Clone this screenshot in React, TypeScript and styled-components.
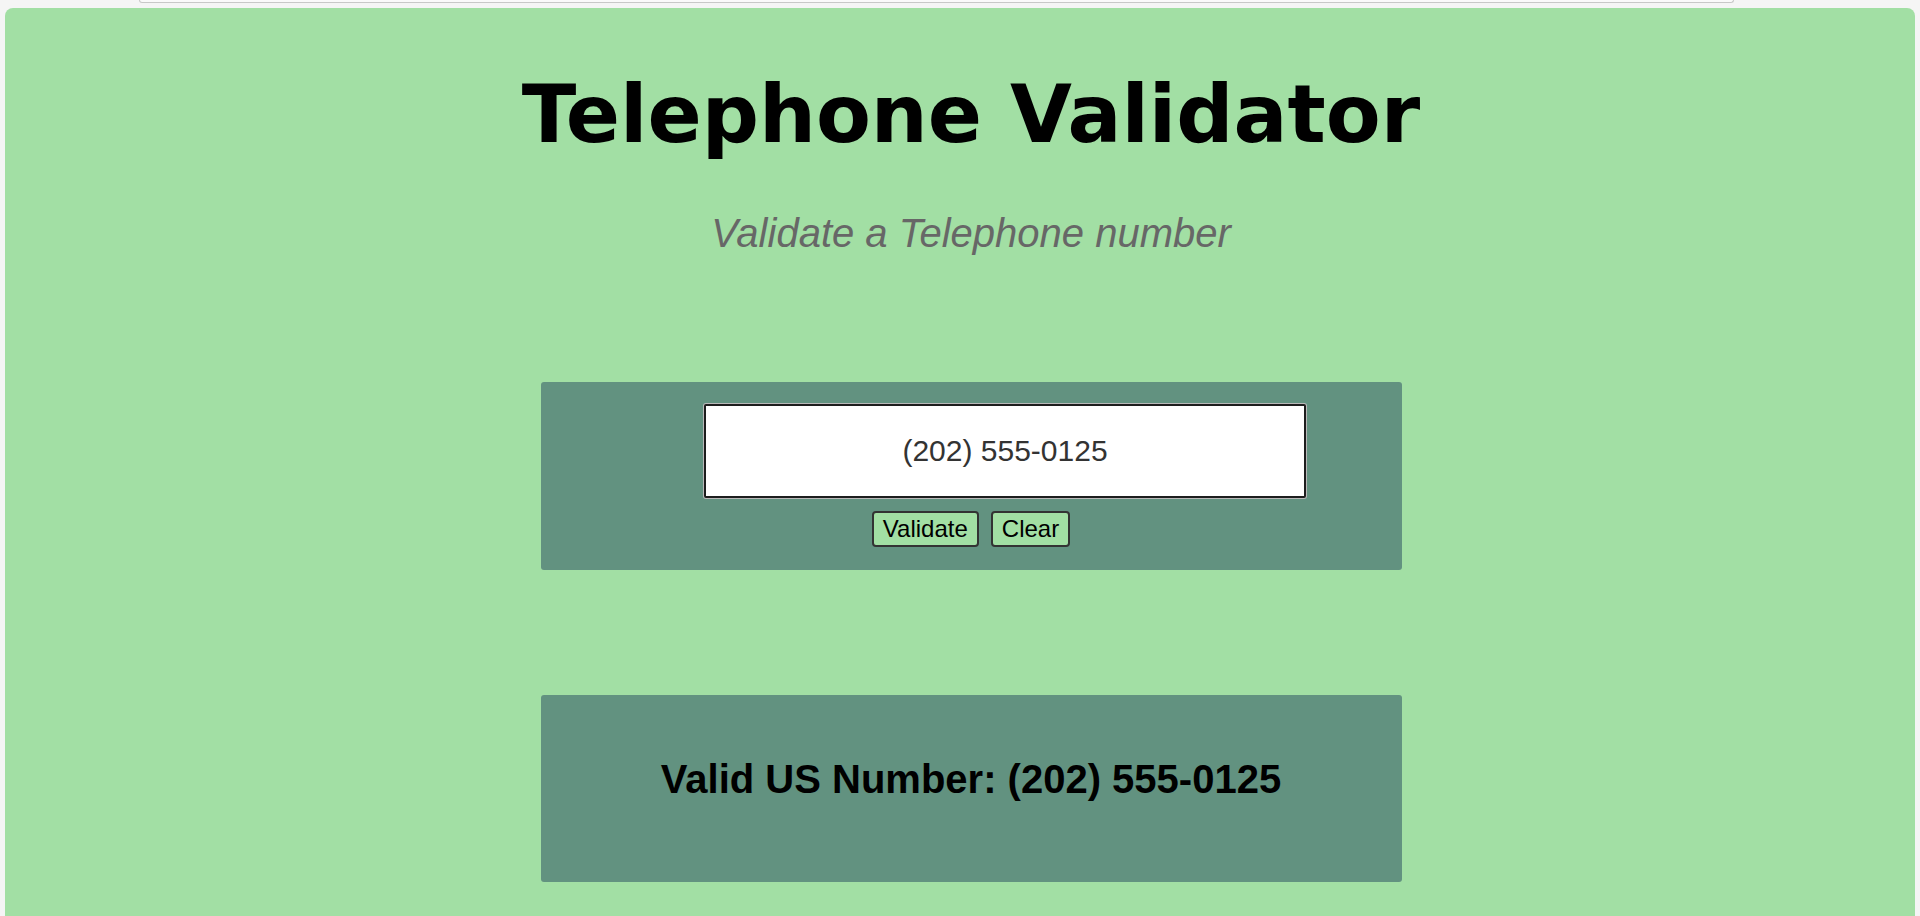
import React, { useState } from 'react';
import styled, { createGlobalStyle } from 'styled-components';

const GlobalStyle = createGlobalStyle`
  html, body {
    margin: 0;
    padding: 0;
    background: #f5f5f5;
    overflow: hidden;
  }
`;

const Page = styled.div`
  display: flex;
  flex-direction: column;
  padding: 0 5px;
`;

// bottom edge of the bar above the app, cut off by the screenshot
const TopStrip = styled.div`
  height: 2px;
  margin: 0 181px 5px 134px;
  border: 1px solid #c8c8c8;
  border-top: none;
  border-radius: 0 0 12px 12px;
  background: #fafafa;
`;

const Wrapper = styled.main`
  display: flex;
  flex-direction: column;
  align-items: center;
  min-height: 1000px;
  padding-left: 22px;
  background: #a2dfa4;
  border-radius: 8px;
  font-family: 'Liberation Sans', Arial, sans-serif;
`;

const Title = styled.h1`
  margin: 60px 0 0;
  font-family: 'DejaVu Sans', Verdana, sans-serif;
  font-size: 80px;
  font-weight: bold;
  color: #000;
`;

const Subtitle = styled.p`
  margin: 50px 0 0;
  font-size: 40px;
  font-style: italic;
  color: #676767;
`;

const Panel = styled.section<{ $top: number }>`
  display: flex;
  flex-direction: column;
  align-items: center;
  box-sizing: border-box;
  width: 861px;
  margin-top: ${(p) => p.$top}px;
  background: #629280;
  border-radius: 3px;
`;

const InputPanel = styled(Panel)`
  padding: 22px 0 23px;
  gap: 13px;
`;

const ResultPanel = styled(Panel)`
  padding: 62px 0 80px;
`;

const PhoneInput = styled.input`
  box-sizing: border-box;
  width: 602px;
  height: 94px;
  margin-left: 68px;
  border: 2px solid #1e1e1e;
  border-radius: 2px;
  box-shadow: 0 0 0 1px #b9b9b9;
  background: #fff;
  font-family: 'Liberation Sans', Arial, sans-serif;
  font-size: 30px;
  color: #333;
  text-align: center;
  outline: none;
`;

const ButtonRow = styled.div`
  display: flex;
  gap: 12px;
`;

const Button = styled.button`
  padding: 2px 9px;
  border: 2px solid #333;
  border-radius: 4px;
  background: #a2dfa4;
  font-family: 'Liberation Sans', Arial, sans-serif;
  font-size: 24px;
  color: #000;
  cursor: pointer;
`;

const Result = styled.h2`
  margin: 0;
  font-size: 40px;
  font-weight: bold;
  color: #000;
`;

const App: React.FC = () => {
  const [value, setValue] = useState('(202) 555-0125');

  return (
    <>
      <GlobalStyle />
      <Page>
        <TopStrip />
        <Wrapper>
          <Title>Telephone Validator</Title>
          <Subtitle>Validate a Telephone number</Subtitle>
          <InputPanel $top={126}>
            <PhoneInput value={value} onChange={(e) => setValue(e.target.value)} />
            <ButtonRow>
              <Button>Validate</Button>
              <Button onClick={() => setValue('')}>Clear</Button>
            </ButtonRow>
          </InputPanel>
          <ResultPanel $top={125}>
            <Result>Valid US Number: (202) 555-0125</Result>
          </ResultPanel>
        </Wrapper>
      </Page>
    </>
  );
};

export default App;
